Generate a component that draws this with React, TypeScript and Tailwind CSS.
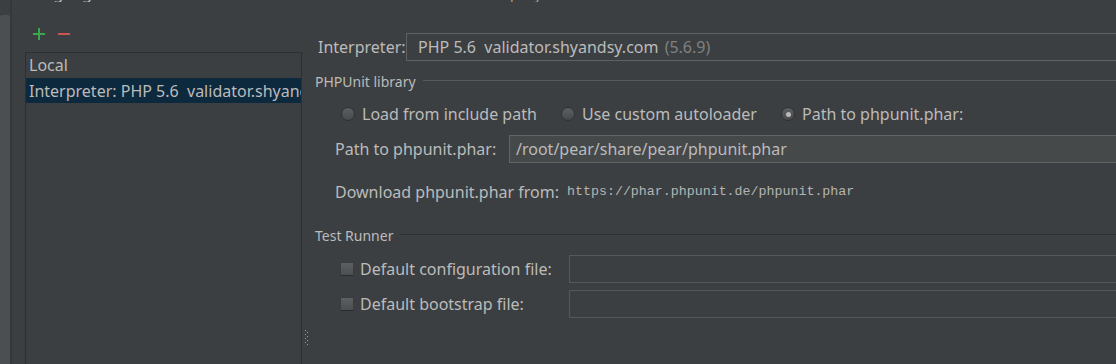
import React from "react";

const font = { fontFamily: '"Noto Sans", "Liberation Sans", sans-serif' };

function Radio({ checked }: { checked?: boolean }) {
    return (
        <span className="w-[14px] h-[14px] rounded-full border border-[#2f3133] bg-gradient-to-b from-[#5d6062] to-[#47494b] flex items-center justify-center shrink-0">
            {checked && <span className="w-[5px] h-[5px] rounded-full bg-[#b9b9b9]" />}
        </span>
    );
}

function CheckBox() {
    return (
        <span className="w-[14px] h-[14px] rounded-[1px] border border-[#3a3c3e] border-b-[#2b2b2b] bg-gradient-to-b from-[#5d6062] to-[#4c4f51] shrink-0" />
    );
}

function SectionTitle({ title, lineClass }: { title: string; lineClass: string }) {
    return (
        <div className="flex items-center h-[20px] gap-[7px] text-[14px]">
            <span>{title}</span>
            <span className={"flex-1 h-px mt-[-2px] " + lineClass} />
        </div>
    );
}

export default function App() {
    return (
        <div className="w-[1116px] h-[364px] bg-[#3c3f41] text-[#bbbbbb] text-[16px] flex overflow-hidden" style={font}>
            {/* left scroll strip */}
            <div className="w-[12px] shrink-0 flex flex-col border-r-2 border-[#35373a]">
                <div className="h-[15px]" />
                <div className="flex-1 bg-[#4c4f51] rounded-t-[2px]" />
            </div>

            <div className="flex-1 flex flex-col">
                {/* cut off breadcrumb */}
                <div className="h-[2px] overflow-hidden shrink-0">
                    <div className="mt-[-17px] h-[20px] leading-[20px] flex whitespace-pre">
                        <span className="ml-[14px]">Languages &amp; Frameworks &gt; PHP &gt; PHPUnit</span>
                        <span className="ml-[72px] text-[#999999]">For current project</span>
                    </div>
                </div>

                <div className="flex-1 flex">
                    {/* interpreters list */}
                    <div className="w-[290px] pl-[13px] flex flex-col shrink-0">
                        <div className="h-[50px] flex items-start pt-[26px] pl-[8px] gap-[13px]">
                            <span className="relative w-[12px] h-[12px]">
                                <span className="absolute left-0 top-[5px] w-[12px] h-[2px] bg-[#3ca64a]" />
                                <span className="absolute left-[5px] top-0 w-[2px] h-[12px] bg-[#3ca64a]" />
                            </span>
                            <span className="w-[12px] h-[2px] mt-[5px] bg-[#c75450]" />
                        </div>
                        <div className="flex-1 border border-[#2d2f31] border-b-0 overflow-hidden">
                            <div className="h-[25px] flex items-center pl-[3px] pb-[1px]">Local</div>
                            <div className="h-[25px] flex items-center pl-[3px] bg-[#0d293e] whitespace-pre overflow-hidden">
                                Interpreter: PHP 5.6  validator.shyandsy.com (5.6.9)
                            </div>
                        </div>
                    </div>

                    {/* splitter */}
                    <div className="w-[1px] shrink-0 flex flex-col pl-[3px]">
                        <div className="mt-[328px] flex flex-col gap-[1px]">
                            {[0, 1, 2, 3, 4, 5, 6, 7].map((i) => (
                                <span key={i} className={"w-[1px] h-[1px] bg-[#9a9a9a] " + (i % 2 ? "ml-[2px]" : "")} />
                            ))}
                        </div>
                    </div>

                    {/* settings */}
                    <div className="flex-1 pl-[10px] pt-[31px] flex flex-col">
                        <div className="flex items-center h-[28px] ml-[3px]">
                            <span className="w-[88px] shrink-0">Interpreter:</span>
                            <div className="flex-1 h-[28px] -mr-[4px] border border-[#5f6263] flex items-center pl-[11px] whitespace-pre">
                                PHP 5.6  validator.shyandsy.com <span className="text-[#808080] ml-[2px]">(5.6.9)</span>
                            </div>
                        </div>

                        <div className="mt-[10px]">
                            <SectionTitle title="PHPUnit library" lineClass="bg-[#585a5c]" />
                        </div>

                        <div className="mt-[13px] h-[20px] flex items-center pl-[26px]">
                            <div className="w-[220px] flex items-center gap-[7px]">
                                <Radio />
                                <span>Load from include path</span>
                            </div>
                            <div className="w-[220px] flex items-center gap-[7px]">
                                <Radio />
                                <span>Use custom autoloader</span>
                            </div>
                            <div className="flex items-center gap-[7px]">
                                <Radio checked />
                                <span>Path to phpunit.phar:</span>
                            </div>
                        </div>

                        <div className="mt-[11px] flex items-center pl-[20px]">
                            <span className="w-[174px] shrink-0">Path to phpunit.phar:</span>
                            <div className="flex-1 h-[28px] -mr-[4px] bg-[#45494a] border border-[#646464] flex items-center pl-[6px]">
                                /root/pear/share/pear/phpunit.phar
                            </div>
                        </div>

                        <div className="mt-[19px] h-[20px] flex items-center pl-[20px] gap-[8px]">
                            <span>Download phpunit.phar from:</span>
                            <span className="text-[13.3px] text-[#b4b4b4]" style={{ fontFamily: '"Liberation Mono", "DejaVu Sans Mono", monospace' }}>
                                https://phar.phpunit.de/phpunit.phar
                            </span>
                        </div>

                        <div className="mt-[23px]">
                            <SectionTitle title="Test Runner" lineClass="bg-[#2e3032]" />
                        </div>

                        <div className="mt-[10px] flex items-center pl-[25px]">
                            <div className="w-[229px] flex items-center gap-[6px] shrink-0">
                                <CheckBox />
                                <span>Default configuration file:</span>
                            </div>
                            <div className="flex-1 h-[28px] -mr-[4px] border border-[#56585a]" />
                        </div>
                        <div className="mt-[7px] flex items-center pl-[25px]">
                            <div className="w-[229px] flex items-center gap-[6px] shrink-0">
                                <CheckBox />
                                <span>Default bootstrap file:</span>
                            </div>
                            <div className="flex-1 h-[28px] -mr-[4px] border border-[#56585a]" />
                        </div>
                    </div>
                </div>
            </div>
        </div>
    );
}
